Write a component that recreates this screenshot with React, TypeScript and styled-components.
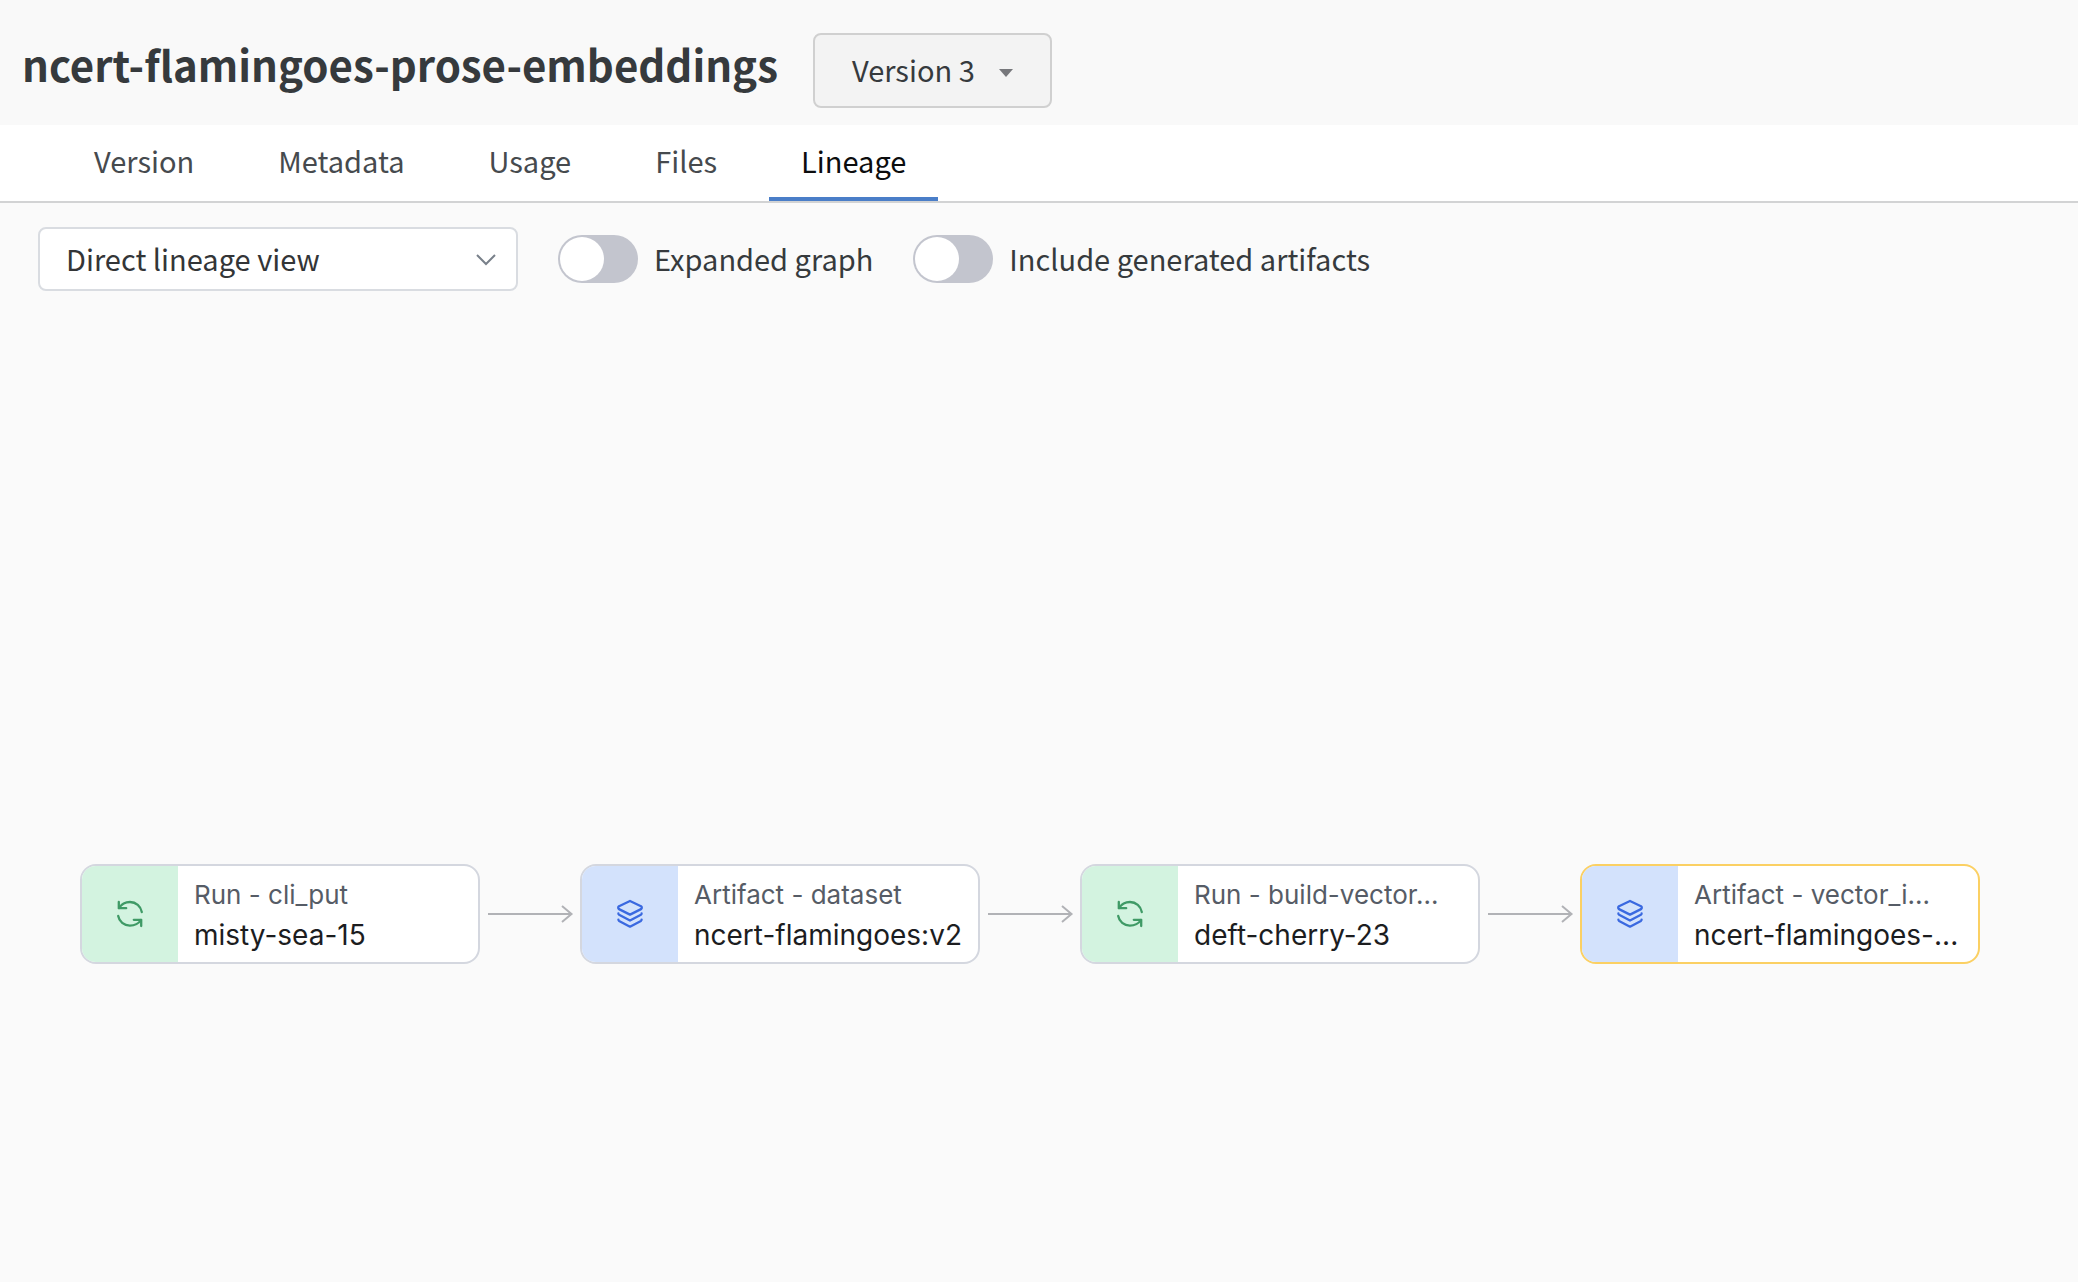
import React, { Fragment, useState } from 'react';
import styled, { createGlobalStyle } from 'styled-components';

const uiFont = '"Source Sans Pro", "Noto Sans CJK SC", sans-serif';
const nodeFont = 'Inter, sans-serif';

const GlobalStyle = createGlobalStyle`
  *, *::before, *::after {
    box-sizing: border-box;
  }

  body {
    margin: 0;
    background: #fafafa;
    color: #363a3d;
    font-family: ${uiFont};
    font-size: 29px;
    line-height: 40px;
  }

  button, select {
    font: inherit;
    color: inherit;
  }
`;

const Page = styled.div`
  display: flex;
  flex-direction: column;
  min-height: 100vh;
`;

const Header = styled.header`
  display: flex;
  align-items: center;
  gap: 35px;
  padding: 33px 22px 17px;
  background: #f9f9f9;
`;

const Title = styled.h1`
  margin: 0;
  padding-bottom: 14px;
  font-size: 42px;
  font-weight: 600;
  line-height: 60px;
`;

const VersionButton = styled.button`
  display: flex;
  align-items: center;
  gap: 24px;
  height: 75px;
  padding: 0 37px 4px;
  border: 2px solid #d0d0d0;
  border-radius: 8px;
  background: #f3f3f3;
  cursor: pointer;
`;

const Caret = styled.span`
  margin-top: 8px;
  border: 7px solid transparent;
  border-top: 8px solid #76777b;
  border-bottom: 0;
`;

const TabBar = styled.nav`
  display: flex;
  gap: 20px;
  padding: 0 62px;
  border-bottom: 2px solid #d2d3d4;
  background: #ffffff;
`;

const Tab = styled.button<{ $active: boolean }>`
  padding: 15px 32px 17px;
  border: 0;
  border-bottom: 4px solid ${({ $active }) => ($active ? '#4a7ec8' : 'transparent')};
  background: none;
  color: ${({ $active }) => ($active ? '#0c0d0e' : '#464a4e')};
  cursor: pointer;
`;

const Toolbar = styled.div`
  display: flex;
  align-items: center;
  gap: 40px;
  padding: 24px 38px;
`;

const SelectBox = styled.div`
  position: relative;
  width: 480px;
`;

const Select = styled.select`
  display: block;
  width: 100%;
  height: 64px;
  padding: 0 60px 3px 26px;
  border: 2px solid #d9dce1;
  border-radius: 8px;
  background: #ffffff;
  color: #333537;
  appearance: none;
`;

const SelectChevron = styled.svg`
  position: absolute;
  top: 24px;
  right: 21px;
  width: 22px;
  height: 16px;
  fill: none;
  stroke: #79808a;
  stroke-width: 2;
  pointer-events: none;
`;

const ToggleLabel = styled.label`
  display: flex;
  align-items: center;
  gap: 16px;
  cursor: pointer;
`;

const ToggleText = styled.span`
  padding-bottom: 3px;
`;

const Toggle = styled.input`
  width: 80px;
  height: 48px;
  margin: 0;
  padding: 2px;
  border-radius: 24px;
  background: #c3c5ce;
  appearance: none;
  cursor: pointer;

  &::before {
    content: '';
    display: block;
    width: 44px;
    height: 44px;
    border-radius: 50%;
    background: #ffffff;
  }

  &:checked {
    background: #4a7ec8;
  }

  &:checked::before {
    margin-left: auto;
  }
`;

const Canvas = styled.main`
  display: grid;
  flex: 1;
  grid-template-rows: 549fr auto 318fr;
`;

const Graph = styled.div`
  display: flex;
  grid-row: 2;
  align-items: center;
  padding: 0 80px;
`;

const Node = styled.article<{ $selected: boolean }>`
  display: flex;
  flex: none;
  width: 400px;
  height: 100px;
  overflow: hidden;
  border: 2px solid ${({ $selected }) => ($selected ? '#fbd063' : '#d4d7df')};
  border-radius: 16px;
  background: #ffffff;
`;

const NodeBadge = styled.div<{ $kind: NodeKind }>`
  display: flex;
  flex: none;
  align-items: center;
  justify-content: center;
  width: 96px;
  background: ${({ $kind }) => ($kind === 'run' ? '#d3f3e0' : '#d3e2fc')};
  color: ${({ $kind }) => ($kind === 'run' ? '#3f9a66' : '#3a69e0')};
`;

const NodeText = styled.div`
  display: flex;
  flex: 1;
  flex-direction: column;
  justify-content: center;
  min-width: 0;
  padding: 2px 16px 0;
  font-family: ${nodeFont};
  line-height: 40px;
  white-space: nowrap;
`;

const NodeType = styled.span`
  color: #565c66;
  font-size: 26px;
`;

const NodeName = styled.span`
  color: #1c1d1f;
  font-size: 28px;
`;

const NodeIcon = styled.svg`
  width: 32px;
  height: 32px;
  fill: none;
  stroke: currentColor;
  stroke-width: 2.3;
  stroke-linecap: round;
  stroke-linejoin: round;
`;

const Edge = styled.svg`
  flex: none;
  width: 100px;
  height: 24px;
  fill: none;
  stroke: #b1b2b6;
  stroke-width: 2;
`;

type NodeKind = 'run' | 'artifact';

interface LineageNode {
  kind: NodeKind;
  type: string;
  name: string;
  selected?: boolean;
}

const tabs = ['Version', 'Metadata', 'Usage', 'Files', 'Lineage'];

const nodes: LineageNode[] = [
  { kind: 'run', type: 'Run - cli_put', name: 'misty-sea-15' },
  { kind: 'artifact', type: 'Artifact - dataset', name: 'ncert-flamingoes:v2' },
  { kind: 'run', type: 'Run - build-vector...', name: 'deft-cherry-23' },
  { kind: 'artifact', type: 'Artifact - vector_i...', name: 'ncert-flamingoes-...', selected: true },
];

function RunIcon() {
  return (
    <NodeIcon viewBox="0 0 32 32" aria-hidden="true">
      <path d="M4.8 4v6.2h7.4" />
      <path d="M5 10C7.200 6.600 11.200 4 16 4c6 0 10.800 4.200 11.800 10" />
      <path d="M27.200 28v-6.200h-7.400" />
      <path d="M4.200 18c1 5.600 5.800 9.600 11.600 9.600 4.600 0 9-2.200 11.200-5.600" />
    </NodeIcon>
  );
}

function ArtifactIcon() {
  return (
    <NodeIcon viewBox="0 0 32 32" aria-hidden="true">
      <path d="M16 3l11 5.200q1.600 1.400 0 2.900L16 16.600 5 11.100q-1.600-1.500 0-2.900z" />
      <path d="M4.400 15.500q0 .9.700 1.300L16 22.600l10.900-5.800q.7-.4.700-1.300" />
      <path d="M4.400 21.600q0 .9.700 1.300L16 28.700l10.900-5.800q.7-.4.700-1.300" />
    </NodeIcon>
  );
}

function LineageCard({ node }: { node: LineageNode }) {
  return (
    <Node $selected={Boolean(node.selected)}>
      <NodeBadge $kind={node.kind}>{node.kind === 'run' ? <RunIcon /> : <ArtifactIcon />}</NodeBadge>
      <NodeText>
        <NodeType>{node.type}</NodeType>
        <NodeName>{node.name}</NodeName>
      </NodeText>
    </Node>
  );
}

export default function App() {
  const [active, setActive] = useState('Lineage');

  return (
    <Page>
      <GlobalStyle />
      <Header>
        <Title>ncert-flamingoes-prose-embeddings</Title>
        <VersionButton type="button" aria-haspopup="listbox">
          Version 3
          <Caret aria-hidden="true" />
        </VersionButton>
      </Header>
      <TabBar>
        {tabs.map((tab) => (
          <Tab key={tab} type="button" $active={tab === active} onClick={() => setActive(tab)}>
            {tab}
          </Tab>
        ))}
      </TabBar>
      <Toolbar>
        <SelectBox>
          <Select aria-label="Lineage view">
            <option>Direct lineage view</option>
          </Select>
          <SelectChevron viewBox="0 0 22 16" aria-hidden="true">
            <path d="M2 4l9 9 9-9" />
          </SelectChevron>
        </SelectBox>
        <ToggleLabel>
          <Toggle type="checkbox" />
          <ToggleText>Expanded graph</ToggleText>
        </ToggleLabel>
        <ToggleLabel>
          <Toggle type="checkbox" />
          <ToggleText>Include generated artifacts</ToggleText>
        </ToggleLabel>
      </Toolbar>
      <Canvas>
        <Graph>
          {nodes.map((node, index) => (
            <Fragment key={node.name}>
              {index > 0 && (
                <Edge viewBox="0 0 100 24" aria-hidden="true">
                  <path d="M8 12h84M82 4l9.500 8L82 20" />
                </Edge>
              )}
              <LineageCard node={node} />
            </Fragment>
          ))}
        </Graph>
      </Canvas>
    </Page>
  );
}
